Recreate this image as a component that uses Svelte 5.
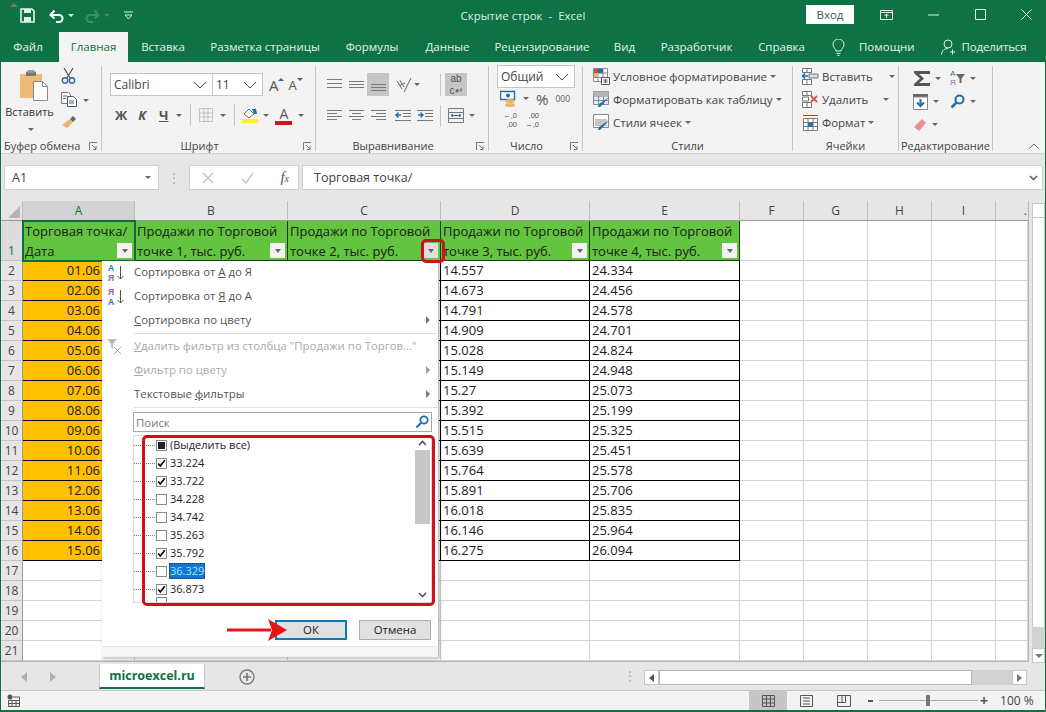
<script lang="ts">
const tabs = [
  ["Файл", 54], ["Главная", 69], ["Вставка", 70], ["Разметка страницы", 134], ["Формулы", 80],
  ["Данные", 71], ["Рецензирование", 118], ["Вид", 47], ["Разработчик", 97], ["Справка", 73]
];
const colNames = ["A", "B", "C", "D", "E", "F", "G", "H", "I", "."];
const d = ["14.557","14.673","14.791","14.909","15.028","15.149","15.27","15.392","15.515","15.639","15.764","15.891","16.018","16.146","16.275"];
const e = ["24.334","24.456","24.578","24.701","24.824","24.948","25.073","25.199","25.325","25.451","25.578","25.706","25.835","25.964","26.094"];
const rows = Array.from({ length: 20 }, (_, i) => i + 2);
const heads = [
  ["Продажи по Торговой", "точке 1, тыс. руб."],
  ["Продажи по Торговой", "точке 2, тыс. руб."],
  ["Продажи по Торговой", "точке 3, тыс. руб."],
  ["Продажи по Торговой", "точке 4, тыс. руб."]
];
const checks = [
  ["33.224", true], ["33.722", true], ["34.228", false], ["34.742", false],
  ["35.263", false], ["35.792", true], ["36.329", false], ["36.873", true]
];
function date(r: number) {
  return String(r - 1).padStart(2, "0") + ".06";
}
</script>

{#snippet launcher()}
  <svg class="launch" width="9" height="9" viewBox="0 0 9 9"><path d="M.5 8V.5H8M3 3l4 4M7 4v3.500H4" fill="none" stroke="#777"/></svg>
{/snippet}

{#snippet filterBtn(active = false)}
  <span class="fbtn" class:active><i></i></span>
{/snippet}

<div class="win">
  <header class="title">
    <div class="qa">
      <svg width="15" height="15" viewBox="0 0 15 15"><path d="M1 1h11l2 2v11H1z" fill="none" stroke="#e2f3ea" stroke-width="1.600"/><path d="M4 1h7v4H4zM4 9h7v5H4z" fill="#e2f3ea"/></svg>
      <svg class="undo" width="15" height="14" viewBox="0 0 15 14"><path d="M2 6h8a3.500 3.500 0 0 1 0 7H7M5.500 1.500 1.500 6l4 3.500" fill="none" stroke="#fff" stroke-width="2"/></svg>
      <i class="tri light"></i>
      <svg class="redo" width="15" height="14" viewBox="0 0 15 14"><path d="M13 6H5a3.500 3.500 0 0 0 0 7h3M9.500 1.500l4 4.500-4 3.500" fill="none" stroke="#3a8f68" stroke-width="2"/></svg>
      <i class="tri dim"></i>
      <svg class="custom" width="9" height="9" viewBox="0 0 9 9"><path d="M0 1h9M1 4h7L4.500 8z" fill="none" stroke="#d5efe0"/></svg>
    </div>
    <div class="name">Скрытие строк &nbsp;-&nbsp; Excel</div>
    <div class="winbtns">
      <span class="login">Вход</span>
      <svg class="b1" width="13" height="10" viewBox="0 0 13 10"><path d="M.5.500h12v9H.5zM.5 2.500h12M6.500 8V4M4.500 6l2-2 2 2" fill="none" stroke="#e2f3ea"/></svg>
      <svg class="b2" width="11" height="10" viewBox="0 0 11 10"><path d="M0 5h11" stroke="#e2f3ea"/></svg>
      <svg class="b3" width="11" height="11" viewBox="0 0 11 11"><path d="M.5.500h10v10H.5z" fill="none" stroke="#e2f3ea"/></svg>
      <svg class="b4" width="11" height="11" viewBox="0 0 11 11"><path d="M.5.500l10 10M10.500.500l-10 10" stroke="#e2f3ea"/></svg>
    </div>
  </header>

  <nav class="tabs">
    {#each tabs as [t, w], i}
      <span class="tab" class:on={i === 1} class:first={i === 0} style="width:{w}px">{t}</span>
    {/each}
    <svg class="lamp" width="13" height="17" viewBox="0 0 13 17"><path d="M4 12c0-2-3-3.500-3-6.500a5.500 5.500 0 0 1 11 0C12 8.500 9 10 9 12zM4.500 14.500h4M5.500 16.500h2" fill="none" stroke="#e2f3ea"/></svg>
    <span class="tab help">Помощни</span>
    <svg class="person" width="15" height="16" viewBox="0 0 15 16"><circle cx="7" cy="5" r="4" fill="none" stroke="#e2f3ea"/><path d="M.5 15.500c.5-4 3-6 6.500-6M11.500 10.500v5M9 13h5" fill="none" stroke="#e2f3ea"/></svg>
    <span class="tab share">Поделиться</span>
  </nav>

  <div class="ribbon">
    <section class="group g-clip">
      <div class="body clip">
        <div class="paste">
          <svg width="30" height="31" viewBox="0 0 30 31">
            <path d="M1 4h22v24H1z" fill="#edbb75"/><path d="M7 1.500h10V6H7z" fill="#777"/><path d="M9 0h6v3H9z" fill="#999"/>
            <path d="M14.500 11.500h9l5 5v14h-14z" fill="#fff" stroke="#888"/><path d="M23.500 11.500v5h5" fill="none" stroke="#888"/>
          </svg>
          <span>Вставить</span>
          <i class="tri"></i>
        </div>
        <div class="clip-tools">
          <svg width="15" height="16" viewBox="0 0 15 16"><path d="M3 0l6 10M12 0 6 10" stroke="#555" stroke-width="1.200"/><circle cx="4" cy="12.500" r="2.700" fill="none" stroke="#2a6da6" stroke-width="1.400"/><circle cx="11" cy="12.500" r="2.700" fill="none" stroke="#2a6da6" stroke-width="1.400"/></svg>
          <div class="row-c">
            <svg width="16" height="15" viewBox="0 0 16 15"><path d="M.5.500h7l2 2v9H.5z" fill="#fff" stroke="#777"/><path d="M6.500 4.500h6l3 3v7h-9z" fill="#fff" stroke="#555"/><path d="M2 4h4M2 6.500h3M8 9h5M8 11h5" stroke="#2a6da6"/></svg>
            <i class="tri"></i>
          </div>
          <svg width="16" height="14" viewBox="0 0 16 14"><path d="M9 4l3 3-6 6-5-3z" fill="#eab56a"/><path d="M9 4l3-3 3 3-3 3z" fill="#666"/></svg>
        </div>
      </div>
      <div class="label lt">Буфер обмена {@render launcher()}</div>
    </section>

    <section class="group g-font">
      <div class="body font">
        <div class="fr1">
          <span class="sel s-font">Calibri<svg width="14" height="8" viewBox="0 0 14 8"><path d="M1 1l6 6 6-6" fill="none" stroke="#444"/></svg></span>
          <span class="sel s-size">11<svg width="14" height="8" viewBox="0 0 14 8"><path d="M1 1l6 6 6-6" fill="none" stroke="#444"/></svg></span>
          <span class="bigA">A<b class="up"></b></span>
          <span class="smallA">A<b class="down"></b></span>
        </div>
        <div class="fr2">
          <b class="bf zh">Ж</b>
          <b class="bf ka">К</b>
          <b class="bf che">Ч</b>
          <i class="tri t1"></i>
          <em class="vsep s1"></em>
          <svg class="borders" width="14" height="14" viewBox="0 0 14 14"><path d="M.5.500h13v13H.5zM5 .5v13M9 .5v13M.5 5h13M.5 9h13" fill="none" stroke="#999" stroke-dasharray="1 1"/></svg>
          <i class="tri t2"></i>
          <em class="vsep s2"></em>
          <svg class="fill" width="17" height="17" viewBox="0 0 17 17"><path d="M2 7l5-5 5 5-5 4z" fill="#fff" stroke="#666"/><path d="M10 2h4l1 5h-3z" fill="#2a6da6"/><path d="M0 12h16v4H0z" fill="#ffee33"/></svg>
          <i class="tri t3"></i>
          <span class="colorA">A</span>
          <i class="tri t4"></i>
        </div>
      </div>
      <div class="label lr">Шрифт {@render launcher()}</div>
    </section>

    <section class="group g-align">
      <div class="body align">
        <div class="ar1">
          <span class="cell-ic"><svg width="15" height="11" viewBox="0 0 15 11"><path d="M0 .5h15M0 4.500h15M0 8.500h15" stroke="#777"/></svg></span>
          <span class="cell-ic"><svg width="15" height="9" viewBox="0 0 15 9"><path d="M0 1.500h15M0 4.500h15M0 7.500h15" stroke="#777"/></svg></span>
          <span class="cell-ic sel-ic bottom"><svg width="15" height="9" viewBox="0 0 15 9"><path d="M0 1.500h15M0 4.500h15M0 7.500h15" stroke="#777"/></svg></span>
          <span class="cell-ic orient"><svg width="17" height="16" viewBox="0 0 17 16"><path d="M7 12 2 4M9 10 5 3.500M16 1 9 15" stroke="#666" fill="none"/><path d="M4 9l6-3" stroke="#b04a4a"/></svg></span>
          <i class="tri"></i>
          <em class="vsep"></em>
          <span class="wrap-ic">ab<br>c↵</span>
        </div>
        <div class="ar2">
          <span class="cell-ic"><svg width="15" height="11" viewBox="0 0 15 11"><path d="M0 .5h15M0 3.500h10M0 6.500h15M0 9.500h10" stroke="#777"/></svg></span>
          <span class="cell-ic"><svg width="15" height="11" viewBox="0 0 15 11"><path d="M0 .5h15M3 3.500h9M0 6.500h15M3 9.500h9" stroke="#777"/></svg></span>
          <span class="cell-ic"><svg width="15" height="11" viewBox="0 0 15 11"><path d="M0 .5h15M5 3.500h10M0 6.500h15M5 9.500h10" stroke="#777"/></svg></span>
          <span class="cell-ic indent"><svg width="16" height="12" viewBox="0 0 16 12"><path d="M0 .5h16M8 3.500h8M8 6.500h8M0 10.500h16" stroke="#777"/><path d="M6 5H1M3.500 2.500 1 5l2.500 2.500" fill="none" stroke="#1f6fb0" stroke-width="1.400"/></svg></span>
          <span class="cell-ic"><svg width="16" height="12" viewBox="0 0 16 12"><path d="M0 .5h16M8 3.500h8M8 6.500h8M0 10.500h16" stroke="#777"/><path d="M1 5h5M3.500 2.500 6 5 3.500 7.500" fill="none" stroke="#1f6fb0" stroke-width="1.400"/></svg></span>
          <em class="vsep"></em>
          <svg class="merge" width="16" height="15" viewBox="0 0 16 15"><path d="M.5.500h15v14H.5zM.5 4.500h15M.5 10.500h15" fill="none" stroke="#777"/><path d="M3 7.500h10M5 6 3 7.500 5 9M11 6l2 1.500L11 9" fill="none" stroke="#1f6fb0"/></svg>
          <i class="tri"></i>
        </div>
      </div>
      <div class="label lr">Выравнивание {@render launcher()}</div>
    </section>

    <section class="group g-num">
      <div class="body num">
        <span class="sel s-num">Общий<svg width="14" height="8" viewBox="0 0 14 8"><path d="M1 1l6 6 6-6" fill="none" stroke="#444"/></svg></span>
        <div class="nr2">
          <svg width="18" height="18" viewBox="0 0 18 18"><path d="M.5 1.500h14v8H.5z" fill="#fff" stroke="#1f6fb0" stroke-width="1.400"/><circle cx="8" cy="5.500" r="2" fill="#1f6fb0"/><ellipse cx="10" cy="11" rx="5" ry="2" fill="#eab56a"/><ellipse cx="10" cy="15" rx="5" ry="2" fill="#eab56a"/></svg>
          <i class="tri"></i>
          <span class="pct">%</span>
          <span class="kilo">000</span>
        </div>
        <div class="nr3">
          <span class="dec">←,0<br>,00</span>
          <span class="dec">,00<br>→,0</span>
        </div>
      </div>
      <div class="label lr">Число {@render launcher()}</div>
    </section>

    <section class="group g-styles">
      <div class="body lines">
        <div class="line">
          <svg width="17" height="17" viewBox="0 0 17 17"><path d="M.5.500h14v13H.5zM5 .5v13M10 .5v13M.5 5h14M.5 9.500h14" fill="#fff" stroke="#888"/><path d="M1 1h4v4H1z" fill="#c0504d"/><path d="M1 5h4v4H1z" fill="#eab56a"/><path d="M5 1h5v4H5z" fill="#2a6da6"/><path d="M8.500 9.500h8v7h-8z" fill="#fff" stroke="#555"/><path d="M10.500 12h4M10.500 14h4M12.500 11v4" stroke="#555"/></svg>
          <span>Условное форматирование</span><i class="tri"></i>
        </div>
        <div class="line">
          <svg width="17" height="17" viewBox="0 0 17 17"><path d="M.5.500h15v13H.5zM5.500.5v13M10.500.5v13M.5 5h15M.5 9.500h15" fill="#e4ecf4" stroke="#888"/><path d="M.5.500h15V5H.5z" fill="#b6b6b6"/><path d="M16 6l-6 7-3 3-2 0 1-3z" fill="#1f6fb0"/></svg>
          <span>Форматировать как таблицу</span><i class="tri"></i>
        </div>
        <div class="line">
          <svg width="17" height="17" viewBox="0 0 17 17"><path d="M.5.500h15v13H.5z" fill="#fff" stroke="#888"/><path d="M2 5h12v7H2z" fill="#c4c4c4"/><path d="M16 6l-6 7-3 3-2 0 1-3z" fill="#1f6fb0"/></svg>
          <span>Стили ячеек</span><i class="tri"></i>
        </div>
      </div>
      <div class="label">Стили</div>
    </section>

    <section class="group g-cells">
      <div class="body lines">
        <div class="line">
          <svg width="17" height="17" viewBox="0 0 17 17"><path d="M.5.500h9v4h-9zM5 .5v4M.5 11.500h9v5h-9zM5 11.500v5" fill="#fff" stroke="#777"/><path d="M7 6h9v4H7z" fill="#cfe0ef" stroke="#777"/><path d="M6 8H0M3 5.500 .5 8 3 10.500" fill="none" stroke="#1f6fb0" stroke-width="1.500"/></svg>
          <span>Вставить</span><i class="tri far"></i>
        </div>
        <div class="line">
          <svg width="17" height="17" viewBox="0 0 17 17"><path d="M.5.500h9v4h-9zM5 .5v4M.5 11.500h9v5h-9zM5 11.500v5M.5 6h6v4h-6z" fill="#fff" stroke="#777"/><path d="M9 5l6 6M15 5l-6 6" stroke="#d0584a" stroke-width="1.800"/></svg>
          <span>Удалить</span><i class="tri far2"></i>
        </div>
        <div class="line">
          <svg width="17" height="17" viewBox="0 0 17 17"><path d="M1.500 4.500h14v12h-14zM1.500 8.500h14M1.500 12.500h14M6 4.500v12M11 4.500v12" fill="#fff" stroke="#777"/><path d="M6 8.500h5v4H6z" fill="#1f6fb0"/><path d="M1 1.500h15" stroke="#1f6fb0"/></svg>
          <span>Формат</span><i class="tri"></i>
        </div>
      </div>
      <div class="label">Ячейки</div>
    </section>

    <section class="group g-edit">
      <div class="body edit">
        <div class="er er1">
          <svg class="sigma" width="16" height="15" viewBox="0 0 16 15"><path d="M0 0h16v3H5l5 4.500L5 12h11v3H0v-2l6-5.500L0 2z" fill="#555"/></svg>
          <i class="tri"></i>
          <span class="az"><span>А</span><span>Я</span></span>
          <svg width="9" height="9" viewBox="0 0 9 9"><path d="M0 0h9L5.500 4.500V9h-2V4.500z" fill="#666"/></svg>
          <i class="tri"></i>
        </div>
        <div class="er er2">
          <svg width="15" height="16" viewBox="0 0 15 16"><path d="M0 0h15v3H0z" fill="#666"/><path d="M.5 3h14v12.500H.5z" fill="#fff" stroke="#888"/><path d="M7.500 5v7M4 8.500l3.500 3.500L11 8.500" fill="none" stroke="#1f6fb0" stroke-width="2"/></svg>
          <i class="tri"></i>
          <svg class="mag" width="15" height="15" viewBox="0 0 15 15"><circle cx="9.500" cy="5.500" r="4" fill="none" stroke="#1f6fb0" stroke-width="2"/><path d="M6.500 8.500l-5 5" stroke="#1f6fb0" stroke-width="2.500"/></svg>
          <i class="tri"></i>
        </div>
        <div class="er er3">
          <svg width="14" height="14" viewBox="0 0 14 14"><path d="M9 1l4 4-7 8-5-4z" fill="#ee8f96"/></svg>
          <i class="tri"></i>
        </div>
      </div>
      <div class="label">Редактирование</div>
    </section>
    <svg class="collapse" width="10" height="6" viewBox="0 0 10 6"><path d="M.5 5.500 5 1l4.500 4.500" fill="none" stroke="#666"/></svg>
  </div>

  <div class="fbar">
    <div class="namebox">A1<i class="tri"></i></div>
    <span class="dots">⋮</span>
    <div class="fxbox">
      <svg width="12" height="12" viewBox="0 0 12 12"><path d="M1 1l10 10M11 1 1 11" stroke="#c8c8c8" stroke-width="1.600"/></svg>
      <svg width="13" height="12" viewBox="0 0 13 12"><path d="M1 7l4 4 7-10" fill="none" stroke="#c8c8c8" stroke-width="1.600"/></svg>
      <span class="fx">f<small>x</small></span>
    </div>
    <div class="input">Торговая точка/
      <svg width="9" height="6" viewBox="0 0 9 6"><path d="M1 1l3.500 3.500L8 1" fill="none" stroke="#666" stroke-width="1.600"/></svg>
    </div>
  </div>

  <div class="sheet-row">
    <div class="sheet">
      <div class="corner"><i></i></div>
      {#each colNames as c, i}
        <div class="ch" class:cur={i === 0} class:clipped={i === 9}>{c}</div>
      {/each}

      <div class="rh rh1"><span>1</span></div>
      <div class="c head a1">
        <span>Торговая точка/</span><span>Дата</span>
        {@render filterBtn()}
      </div>
      {#each heads as h, i}
        <div class="c head">
          <span>{h[0]}</span><span>{h[1]}</span>
          {@render filterBtn(i === 1)}
        </div>
      {/each}
      {#each { length: 5 } as _}<div class="c"></div>{/each}

      {#each rows as r}
        <div class="rh">{r}</div>
        {#if r <= 16}
          <div class="c dark orange">{date(r)}</div>
          <div class="c dark"></div>
          <div class="c dark"></div>
          <div class="c dark">{d[r - 2]}</div>
          <div class="c dark">{e[r - 2]}</div>
        {:else}
          {#each { length: 5 } as _}<div class="c"></div>{/each}
        {/if}
        {#each { length: 5 } as _}<div class="c"></div>{/each}
      {/each}
    </div>
    <div class="vscroll">
      <span class="sbtn"><i class="up"></i></span>
      <span class="thumb"></span>
      <span class="strack"></span>
      <span class="sbtn"><i class="dn"></i></span>
    </div>
  </div>

  <div class="bottom-bar">
    <i class="nav l"></i>
    <i class="nav r"></i>
    <span class="sheet-tab">microexcel.ru</span>
    <svg class="plus" width="16" height="16" viewBox="0 0 16 16"><circle cx="8" cy="8" r="7" fill="none" stroke="#777" stroke-width="1.300"/><path d="M8 4v8M4 8h8" stroke="#777" stroke-width="1.600"/></svg>
    <span class="tabdots">⋮</span>
    <span class="hscroll"><span class="hbtn"><i class="lf"></i></span><span class="hthumb"></span><span class="htrack"></span><span class="hbtn"><i></i></span></span>
  </div>

  <footer class="status">
    <svg class="macro" width="13" height="13" viewBox="0 0 13 13"><circle cx="3" cy="3" r="2.500" fill="#555"/><path d="M1.500 6.500h11v6h-11zM1.500 9.500h11M5 6.500v6M9 6.500v6M6 3h6.500v3.500" fill="none" stroke="#555"/></svg>
    <span class="view on"><svg width="13" height="12" viewBox="0 0 13 12"><path d="M.5.500h12v11H.5zM4.500.5v11M8.500.5v11M.5 4h12M.5 8h12" fill="none" stroke="#555"/></svg></span>
    <span class="view"><svg width="13" height="12" viewBox="0 0 13 12"><path d="M.5.500h12v11H.5zM3 3h7M3 6h7M3 9h7" fill="none" stroke="#555"/></svg></span>
    <span class="view"><svg width="14" height="12" viewBox="0 0 14 12"><path d="M.5.500h13v11H.5zM.5 7.500h8V.5M5 .5v7" fill="none" stroke="#555"/></svg></span>
    <span class="minus"></span>
    <span class="slider"><i></i></span>
    <span class="plus2">+</span>
    <span class="zoom">100 %</span>
  </footer>

  <div class="menu">
    <div class="mi">
      <span class="sort"><b>А</b><b class="v">Я</b><svg width="7" height="14" viewBox="0 0 7 14"><path d="M3.500 0v13M.5 10l3 3 3-3" fill="none" stroke="#555"/></svg></span>
      Сортировка от <u>А</u> до Я
    </div>
    <div class="mi">
      <span class="sort"><b class="v">Я</b><b>А</b><svg width="7" height="14" viewBox="0 0 7 14"><path d="M3.500 0v13M.5 10l3 3 3-3" fill="none" stroke="#555"/></svg></span>
      Сортировка от <u>Я</u> до А
    </div>
    <div class="mi"><u>С</u>ортировка по цвету<i class="more"></i></div>
    <hr>
    <div class="mi off">
      <svg class="nofilter" width="15" height="15" viewBox="0 0 15 15"><path d="M0 0h10L6 5v5L4 8V5z" fill="#bbb"/><path d="M7 8l7 7M14 8l-7 7" stroke="#aaa"/></svg>
      <u>У</u>далить фильтр из столбца "Продажи по Торгов..."
    </div>
    <div class="mi off"><u>Ф</u>ильтр по цвету<i class="more"></i></div>
    <div class="mi">Текстовые <u>ф</u>ильтры<i class="more"></i></div>
    <hr>
    <div class="search">Поиск
      <svg width="14" height="14" viewBox="0 0 14 14"><circle cx="9" cy="5" r="3.700" fill="none" stroke="#1f6fb0" stroke-width="1.800"/><path d="M6 8l-4.500 4.500" stroke="#1f6fb0" stroke-width="2.200"/></svg>
    </div>
    <div class="list">
      <div class="li"><span class="dash"></span><span class="cb mixed"></span><span class="txt">(Выделить все)</span></div>
      {#each checks as [t, on], i}
        <div class="li">
          <span class="dash"></span>
          <span class="cb">{#if on}<svg width="11" height="11" viewBox="0 0 11 11"><path d="M1.500 5.500 4 8.500 9.500 1.500" fill="none" stroke="#000" stroke-width="2"/></svg>{/if}</span>
          <span class="txt" class:hl={i === 6}>{t}</span>
        </div>
      {/each}
      <div class="li cut"><span class="dash"></span><span class="cb"></span></div>
      <div class="lsb">
        <svg width="9" height="6" viewBox="0 0 9 6"><path d="M1 5l3.500-3.500L8 5" fill="none" stroke="#555" stroke-width="1.600"/></svg>
        <span></span>
        <svg class="dnb" width="9" height="6" viewBox="0 0 9 6"><path d="M1 1l3.500 3.500L8 1" fill="none" stroke="#555" stroke-width="1.600"/></svg>
      </div>
    </div>
    <div class="btns">
      <span class="btn ok">ОК</span>
      <span class="btn">Отмена</span>
    </div>
    <div class="grip"></div>
  </div>

  <span class="redbox rb1"></span>
  <span class="redbox rb2"></span>
  <svg class="arrow" width="60" height="22" viewBox="0 0 60 22"><path d="M0 9.500h44v3H0z" fill="#e8141c"/><path d="M41 0l19 11-19 11 4-11z" fill="#e8141c"/></svg>
</div>

<style>
:global(body) {
  margin: 0;
  background: #fff;
}

.win {
  position: relative;
  width: 1046px;
  height: 712px;
  box-sizing: border-box;
  border: solid #0f7244;
  border-width: 0 1px 2px 1px;
  background: #e6e6e6;
  overflow: hidden;
  font-family: "Open Sans", sans-serif;
  font-size: 12px;
  color: #444;
}

i, em { display: block; font-style: normal; }

.tri {
  width: 0;
  height: 0;
  flex: none;
  border: 3px solid transparent;
  border-top: 3.5px solid #666;
  border-bottom: 0;
}
.tri.light { border-top-color: #d5efe0; }
.tri.dim { border-top-color: #3a8f68; }

.title {
  height: 32px;
  background: #0f7244;
  display: grid;
  grid-template-columns: 1fr auto 1fr;
  align-items: center;
  color: #d9f0e4;
}
.qa { display: flex; align-items: center; padding: 0 0 1px 19px; }
.undo { margin-left: 14px; }
.qa .tri { margin-left: 4px; }
.redo { margin-left: 11px; }
.custom { margin-left: 14px; }
.name { font-size: 11.500px; padding-bottom: 2px; }
.winbtns { display: flex; align-items: center; justify-content: flex-end; padding-bottom: 3px; }
.login {
  width: 48px;
  height: 19px;
  background: #fff;
  color: #3f5a4c;
  text-align: center;
  line-height: 19px;
  font-size: 11.500px;
}
.b1 { margin-left: 26px; }
.b2 { margin-left: 35px; }
.b3 { margin-left: 36px; }
.b4 { margin-left: 35px; margin-right: 13px; }

.tabs {
  height: 30px;
  background: #0f7244;
  display: flex;
  align-items: stretch;
  color: #e2f3ea;
}
.tab {
  text-align: center;
  line-height: 30px;
  font-size: 11.500px;
  white-space: nowrap;
}
.tab.first { margin-right: 4px; }
.tab.on { background: #f3f3f3; color: #0f7244; }
.lamp { align-self: center; margin-left: 14px; }
.help { margin-left: 14px; }
.person { align-self: center; margin-left: 26px; }
.share { margin-left: 6px; letter-spacing: -.15px; }

.ribbon {
  position: relative;
  height: 92px;
  box-sizing: border-box;
  background: #f3f3f3;
  border-bottom: 1px solid #d2d2d2;
  display: flex;
  padding: 4px 0 0 1px;
}
.group {
  position: relative;
  height: 85px;
  box-sizing: border-box;
  border-right: 1px solid #c6c6c6;
  display: flex;
  flex-direction: column;
  flex: none;
}
.g-clip { width: 100px; }
.g-font { width: 214px; }
.g-align { width: 173px; }
.g-num { width: 94px; }
.g-styles { width: 210px; }
.g-cells { width: 106px; }
.g-edit { width: 94px; }
.body { flex: 1; min-height: 0; }
.label {
  height: 16px;
  margin-bottom: -3px;
  line-height: 16px;
  text-align: center;
  font-size: 11px;
  white-space: nowrap;
}
.label.lr { padding-right: 18px; }
.label.lt { text-align: left; padding-left: 2px; }
.launch { position: absolute; right: 3px; bottom: 0; }

.clip { display: flex; }
.paste {
  width: 59px;
  display: flex;
  flex-direction: column;
  align-items: center;
  padding: 4px 0 0 1px;
  box-sizing: border-box;
  color: #333;
}
.paste span { font-size: 11px; margin-top: 1px; line-height: 20px; margin-left: -5px; }
.paste .tri { margin-top: 6px; margin-left: -3px; }
.paste svg { margin-left: 3px; }
.clip-tools { display: flex; flex-direction: column; gap: 8px; padding-top: 2px; align-items: flex-start; }
.row-c { display: flex; align-items: center; gap: 6px; }
.row-c .tri { margin-top: 1px; }

.sel {
  box-sizing: border-box;
  display: flex;
  align-items: center;
  justify-content: space-between;
  height: 23px;
  background: #fff;
  border: 1px solid #c6c6c6;
  padding: 0 5px 0 3px;
  color: #444;
  font-size: 12px;
}
.font { padding: 7px 0 0 8px; }
.fr1 { display: flex; align-items: center; }
.s-font { width: 103px; }
.s-size { width: 51px; margin-left: -1px; }
.bigA, .smallA { position: relative; color: #555; font-size: 15px; }
.bigA { margin-left: 6px; }
.smallA { margin-left: 10px; font-size: 13px; }
.up, .down { position: absolute; left: 9px; top: 3px; width: 0; height: 0; border: 3px solid transparent; }
.up { border-bottom: 3px solid #1f6fb0; border-top: 0; }
.down { border-top: 3px solid #1f6fb0; border-bottom: 0; left: 8px; top: 2px; }
.fr2 { display: flex; align-items: center; height: 20px; margin-top: 9px; }
.bf { font-size: 13px; color: #555; line-height: 20px; }
.zh { margin-left: 5px; }
.ka { margin-left: 11px; font-style: italic; }
.che { margin-left: 13px; text-decoration: underline; }
.t1 { margin-left: 8px; }
.vsep { width: 1px; height: 22px; background: #c6c6c6; flex: none; }
.s1 { margin-left: 8px; }
.borders { margin-left: 8px; }
.t2 { margin-left: 7px; }
.s2 { margin-left: 8px; }
.fill { margin-left: 7px; }
.t3 { margin-left: 4px; }
.colorA {
  margin-left: 6px;
  width: 17px;
  text-align: center;
  color: #555;
  font-size: 14px;
  line-height: 15px;
  border-bottom: 4px solid #d8101a;
}
.t4 { margin-left: 6px; }

.align { padding: 7px 0 0 7px; }
.ar1, .ar2 { display: flex; align-items: center; height: 23px; }
.ar2 { margin-top: 8px; }
.cell-ic { width: 22px; height: 23px; display: flex; align-items: center; justify-content: center; flex: none; }
.sel-ic { background: #c6c6c6; }
.bottom { align-items: flex-end; padding-bottom: 4px; box-sizing: border-box; height: 23px; }
.orient { margin-left: 3px; }
.ar1 .tri { margin-left: 0; }
.ar1 .vsep { margin-left: 20px; }
.wrap-ic {
  width: 22px;
  height: 23px;
  margin-left: 4px;
  background: #c6c6c6;
  color: #555;
  font-family: "Liberation Sans", sans-serif;
  font-size: 10px;
  line-height: 11.500px;
  text-align: center;
  box-sizing: border-box;
}
.indent { margin-left: 3px; }
.ar2 .vsep { margin-left: 4px; }
.merge { margin-left: 7px; }
.ar2 .tri { margin-left: 5px; }

.num { padding: 0 0 0 8px; margin-top: -1px; }
.s-num { width: 78px; }
.nr2 { display: flex; align-items: center; height: 23px; padding-left: 3px; margin-top: -1px; }
.nr2 .tri { margin-left: 5px; }
.pct { margin-left: 7px; color: #555; font-size: 15px; }
.kilo { margin-left: 7px; font-size: 8.500px; color: #555; }
.nr3 { display: flex; gap: 5px; padding: 1px 0 0 3px; }
.dec {
  display: block;
  width: 17px;
  font-family: "Liberation Sans", sans-serif;
  font-size: 7.500px;
  line-height: 9px;
  color: #555;
  text-align: right;
  white-space: nowrap;
}

.lines { display: flex; flex-direction: column; margin-top: -1px; }
.line { height: 23px; display: flex; align-items: center; white-space: nowrap; color: #444; font-size: 11.500px; }
.line svg { margin-right: 3px; flex: none; }
.line .tri { margin-left: 3px; }
.g-styles .line { padding-left: 10px; }
.g-cells .line { padding-left: 9px; }
.line .far { margin-left: 16px; }
.line .far2 { margin-left: 15px; }

.edit { padding-left: 14px; }
.er { display: flex; align-items: center; height: 23px; }
.er .tri { margin-left: 5px; }
.sigma { margin-left: 1px; }
.az {
  display: flex;
  flex-direction: column;
  margin-left: 9px;
  font-family: "Liberation Sans", sans-serif;
  font-size: 8px;
  line-height: 9.200px;
}
.az span:first-child { color: #1f6fb0; }
.az span:last-child { color: #8a5fa8; }
.er1 { height: 24px; }
.mag { margin-left: 11px; }
.collapse { position: absolute; right: 6px; bottom: 4px; }

.fbar {
  height: 47px;
  box-sizing: border-box;
  padding: 11px 2px 0 3px;
  display: flex;
  align-items: flex-start;
}
.namebox, .fxbox, .input {
  height: 25px;
  box-sizing: border-box;
  background: #fff;
  border: 1px solid #d0d0d0;
  display: flex;
  align-items: center;
}
.namebox { width: 155px; padding: 0 7px; justify-content: space-between; font-size: 12.500px; color: #444; }
.dots { width: 30px; text-align: center; color: #aaa; line-height: 25px; }
.fxbox { width: 110px; padding: 0 9px 0 12px; justify-content: space-between; }
.fx { font-family: "Liberation Serif", serif; font-style: italic; font-size: 15px; color: #555; }
.fx small { font-size: 10px; }
.input {
  flex: 1;
  margin-left: 3px;
  padding: 0 4px 0 11px;
  justify-content: space-between;
  font-size: 12.500px;
  color: #444;
}

.sheet-row { display: flex; height: 462px; }
.sheet {
  width: 1027px;
  height: 460px;
  display: grid;
  grid-template-columns: 22px 112px 153px 153px 149px 150px 64px 64px 64px 64px 32px;
  grid-template-rows: 20px 40px repeat(20, 20px);
  border-bottom: 1px solid #b5b5b5;
  border-right: 1px solid #b5b5b5;
  box-sizing: content-box;
  overflow: hidden;
}
.corner { background: #e6e6e6; border-right: 1px solid #bbb; border-bottom: 1px solid #999; position: relative; }
.corner i {
  position: absolute;
  right: 2px;
  bottom: 2px;
  border: 6px solid transparent;
  border-right-color: #b4b4b4;
  border-bottom-color: #b4b4b4;
}
.ch {
  background: #e6e6e6;
  border-right: 1px solid #bbb;
  border-bottom: 1px solid #999;
  text-align: center;
  line-height: 20px;
  font-size: 12px;
  color: #444;
  box-sizing: border-box;
}
.ch.cur { background: #d2d2d2; color: #0f7244; }
.ch.clipped { text-align: right; padding-right: 1px; border-right: 0; }
.rh {
  background: #e6e6e6;
  border-right: 1px solid #999;
  border-bottom: 1px solid #c4c4c4;
  box-sizing: border-box;
  text-align: center;
  line-height: 19px;
  font-size: 12px;
  color: #444;
}
.rh1 { background: #dcdcdc; color: #0f7244; display: flex; align-items: flex-end; justify-content: center; }
.c {
  position: relative;
  box-sizing: border-box;
  background: #fff;
  border-right: 1px solid #d4d4d4;
  border-bottom: 1px solid #d4d4d4;
  padding-left: 2px;
  line-height: 19px;
  font-size: 13px;
  color: #1a1a1a;
  white-space: nowrap;
}
.c.dark { border-color: #000; }
.orange { background: #ffc000; text-align: right; padding-right: 34px; }
.head {
  background: #62c43f;
  border-color: #1d3a12;
  display: flex;
  flex-direction: column;
  line-height: 20px;
}
.a1 { outline: 2px solid #0f6b3f; outline-offset: -1px; z-index: 1; }
.fbtn {
  position: absolute;
  right: 2px;
  bottom: 2px;
  width: 15px;
  height: 15px;
  background: #f2f2f2;
  display: flex;
  align-items: center;
  justify-content: center;
}
.fbtn i {
  border: 3.500px solid transparent;
  border-top: 4px solid #666;
  border-bottom: 0;
}
.fbtn.active { background: #dfdfdf; }

.vscroll {
  width: 13px;
  margin: 2px 0 0 3px;
  display: flex;
  flex-direction: column;
  height: 460px;
  background: #e6e6e6;
}
.sbtn { height: 15px; background: #fff; border: 1px solid #c6c6c6; box-sizing: border-box; display: flex; align-items: center; justify-content: center; flex: none; }
.sbtn i { width: 0; height: 0; border: 4px solid transparent; }
.sbtn .up { border-bottom: 4px solid #777; border-top: 0; }
.sbtn .dn { border-top: 4px solid #777; border-bottom: 0; }
.thumb { height: 409px; background: #fff; border: 1px solid #c6c6c6; border-width: 0 1px; box-sizing: border-box; flex: none; }
.strack { flex: 1; background: #d2d2d2; }

.bottom-bar {
  height: 28px;
  display: flex;
  align-items: flex-start;
  box-sizing: border-box;
  border-bottom: 1px solid #c6c6c6;
  padding-top: 1px;
}
.nav { width: 0; height: 0; border: 5px solid transparent; margin-top: 8px; }
.nav.l { margin-left: 20px; border-right: 6px solid #b0b0b0; border-left: 0; }
.nav.r { margin-left: 23px; border-left: 6px solid #b0b0b0; border-right: 0; }
.sheet-tab {
  margin-left: 43px;
  width: 106px;
  height: 25px;
  box-sizing: border-box;
  background: #fff;
  border-bottom: 2px solid #0f7244;
  border-left: 1px solid #c6c6c6;
  border-right: 1px solid #c6c6c6;
  text-align: center;
  line-height: 24px;
  color: #0f7244;
  font-weight: 700;
  font-size: 12.500px;
}
.plus { margin: 5px 0 0 34px; }
.tabdots { width: 8px; margin-left: 369px; color: #aaa; line-height: 24px; text-align: center; }
.hscroll { display: flex; margin-left: 12px; width: 383px; height: 15px; margin-top: 6px; }
.hthumb { width: 313px; background: #fff; border: 1px solid #b5b5b5; box-sizing: border-box; flex: none; }
.htrack { flex: 1; background: #d2d2d2; }
.hbtn { width: 15px; flex: none; background: #fff; border: 1px solid #c6c6c6; box-sizing: border-box; display: flex; align-items: center; justify-content: center; }
.hbtn i { border: 4px solid transparent; border-left: 5px solid #777; border-right: 0; }
.hbtn i.lf { border-right: 5px solid #555; border-left: 0; }

.status {
  height: 19px;
  background: #f3f3f3;
  display: flex;
  align-items: center;
}
.macro { margin-left: 6px; }
.view { width: 38px; height: 19px; display: flex; align-items: center; justify-content: center; }
.view.on { background: #c6c6c6; margin-left: 729px; }
.minus { width: 5px; height: 2px; background: #555; margin-left: 5px; }
.slider { position: relative; width: 99px; height: 1px; background: #aaa; margin-left: 6px; }
.slider i { position: absolute; left: 47px; top: -5px; width: 4px; height: 11px; background: #777; }
.plus2 { margin-left: 2px; font-size: 14px; font-weight: 700; color: #555; line-height: 19px; }
.zoom { margin-left: 12px; font-size: 12px; color: #444; }

.menu {
  position: absolute;
  left: 101px;
  top: 261px;
  width: 337px;
  height: 396px;
  box-sizing: border-box;
  background: #fff;
  border-right: 1px solid #bbb;
  border-bottom: 1px solid #bbb;
  box-shadow: 1px 2px 3px rgba(0,0,0,.25);
  z-index: 2;
  font-size: 11.400px;
  color: #555;
}
.mi {
  position: relative;
  height: 24px;
  padding-left: 32px;
  line-height: 22px;
  white-space: nowrap;
}
.mi.off { color: #aaa; }
.more {
  position: absolute;
  right: 8px;
  top: 7px;
  border: 4px solid transparent;
  border-left: 4px solid #777;
  border-right: 0;
}
.mi.off .more { border-left-color: #999; }
.sort {
  position: absolute;
  left: 6px;
  top: 3px;
  width: 16px;
  height: 18px;
  display: flex;
  flex-direction: column;
  font-family: "Liberation Sans", sans-serif;
}
.sort b { font-size: 8.500px; line-height: 9.800px; font-weight: 700; color: #1f6fb0; }
.sort b.v { color: #8a5fa8; }
.sort svg { position: absolute; left: 9px; top: 2px; }
.nofilter { position: absolute; left: 5px; top: 4px; }
hr {
  border: 0;
  height: 1px;
  background: #e0e0e0;
  margin: 0 0 1px 32px;
}
.search {
  margin: 4px 6px 0 31px;
  height: 20px;
  box-sizing: border-box;
  border: 1px solid #a8a8a8;
  padding: 0 2px 0 2px;
  display: flex;
  align-items: center;
  justify-content: space-between;
  color: #777;
}
.list {
  position: relative;
  margin: 3px 6px 0 31px;
  height: 168px;
  box-sizing: border-box;
  border: 1px solid #dcdcdc;
  padding-top: 0;
  overflow: hidden;
  color: #222;
  font-size: 11px;
}
.li { height: 18px; flex: none; display: flex; align-items: center; }
.li.cut { height: 8px; align-items: flex-start; margin-top: -1px; }
.li.cut .dash { margin-top: 5px; }
.dash { width: 21px; border-bottom: 1px dotted #777; flex: none; box-sizing: border-box; }
.cb {
  box-sizing: border-box;
  width: 11px;
  height: 11px;
  background: #fff;
  border: 1px solid #888;
  margin-left: 1px;
  flex: none;
  display: flex;
  align-items: center;
  justify-content: center;
}
.cb.mixed { box-shadow: inset 0 0 0 1px #fff; background: #222; }
.txt { margin-left: 2px; padding: 0 1px; line-height: 16px; }
.txt.hl { background: #0f78d4; color: #a8e6ff; outline: 1px dotted #333; outline-offset: -1px; }
.lsb {
  position: absolute;
  right: 1px;
  top: 4px;
  bottom: 4px;
  width: 16px;
  display: flex;
  flex-direction: column;
  align-items: center;
}
.lsb span { width: 15px; height: 74px; background: #c8c8c8; margin-top: 4px; }
.dnb { margin-top: auto; }
.btns { display: flex; gap: 12px; justify-content: flex-end; padding: 17px 7px 0 0; }
.btn {
  width: 72px;
  height: 20px;
  box-sizing: border-box;
  background: #e1e1e1;
  border: 1px solid #adadad;
  text-align: center;
  line-height: 18px;
  color: #222;
}
.btn.ok { border: 2px solid #0f78b4; line-height: 16px; }
.grip {
  margin-top: 6px;
  height: 10px;
  border-top: 1px solid #e6e6e6;
  background: #f6f6f6;
}

.redbox {
  position: absolute;
  box-sizing: border-box;
  border: 3px solid #d2101c;
  border-radius: 5px;
  z-index: 3;
}
.rb1 { left: 420px; top: 239px; width: 24px; height: 24px; }
.rb2 { left: 141px; top: 435px; width: 293px; height: 171px; }
.arrow { position: absolute; left: 226px; top: 619px; z-index: 3; }
</style>
